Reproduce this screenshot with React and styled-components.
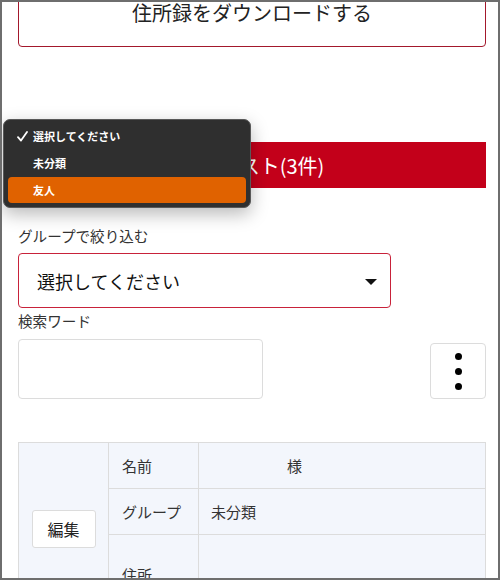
import React from 'react';
import styled, { createGlobalStyle } from 'styled-components';

const GlobalStyle = createGlobalStyle`
  html, body {
    margin: 0;
    padding: 0;
    background: #ffffff;
  }
  body {
    font-family: "Noto Sans CJK JP", "Noto Sans", sans-serif;
    color: #222;
  }
`;

const groups = ['選択してください', '未分類', '友人'];

const App = () => {
  return (
    <>
      <GlobalStyle />
      <Frame>
        <Content>
          <DownloadButton>住所録をダウンロードする</DownloadButton>
          <ListBar>住所リスト(3件)</ListBar>

          <Label>グループで絞り込む</Label>
          <SelectBox>
            <SelectText>選択してください</SelectText>
            <Caret />
          </SelectBox>

          <Label tight>検索ワード</Label>
          <SearchRow>
            <SearchInput />
            <KebabButton>
              <Dot />
              <Dot />
              <Dot />
            </KebabButton>
          </SearchRow>

          <Table>
            <tbody>
              <tr>
                <EditCell rowSpan={3}>
                  <EditButton>編集</EditButton>
                </EditCell>
                <HeadCell>名前</HeadCell>
                <DataCell indent="88px">様</DataCell>
              </tr>
              <tr>
                <HeadCell>グループ</HeadCell>
                <DataCell>未分類</DataCell>
              </tr>
              <tr>
                <HeadCell tall>住所</HeadCell>
                <DataCell tall></DataCell>
              </tr>
            </tbody>
          </Table>
        </Content>

        <Menu>
          {groups.map((g, i) => (
            <MenuItem key={g} active={i === 2}>
              <CheckSlot>
                {i === 0 && (
                  <svg width="11" height="11" viewBox="0 0 11 11">
                    <path d="M1 6.2 L4 9.6 L10 1" fill="none" stroke="#fff" strokeWidth="1.8" strokeLinecap="round" strokeLinejoin="round" />
                  </svg>
                )}
              </CheckSlot>
              {g}
            </MenuItem>
          ))}
        </Menu>
      </Frame>
    </>
  );
};

export default App;

const Frame = styled.div`
  position: relative;
  width: 500px;
  height: 580px;
  box-sizing: border-box;
  border: 2px solid #6e6e6e;
  overflow: hidden;
  background: #fff;
`;

const Content = styled.div`
  padding: 0 12px 0 16px;
  display: flex;
  flex-direction: column;
`;

const DownloadButton = styled.div`
  margin-top: -25px;
  height: 70px;
  box-sizing: border-box;
  border: 1px solid #a3182c;
  border-radius: 4px;
  display: flex;
  align-items: center;
  justify-content: center;
  font-size: 20px;
  color: #222;
`;

const ListBar = styled.div`
  margin-top: 95px;
  height: 46px;
  background: #c3001a;
  color: #fff;
  font-size: 20px;
  display: flex;
  align-items: center;
  justify-content: center;
`;

const Label = styled.div`
  font-size: 14.6px;
  color: #333;
  line-height: 20px;
  padding-top: ${({ tight }) => (tight ? '3px' : '38px')};
`;

const SelectBox = styled.div`
  margin-top: 7px;
  width: 373px;
  height: 55px;
  box-sizing: border-box;
  border: 1px solid #c8223a;
  border-radius: 4px;
  display: flex;
  align-items: center;
  justify-content: space-between;
  padding: 0 13px 0 18px;
`;

const SelectText = styled.span`
  font-size: 18px;
  color: #111;
`;

const Caret = styled.span`
  width: 0;
  height: 0;
  border-left: 6px solid transparent;
  border-right: 6px solid transparent;
  border-top: 6px solid #111;
  margin-top: 2px;
`;

const SearchRow = styled.div`
  margin-top: 8px;
  display: flex;
  justify-content: space-between;
  align-items: flex-end;
`;

const SearchInput = styled.div`
  width: 245px;
  height: 60px;
  box-sizing: border-box;
  border: 1px solid #dcdcdc;
  border-radius: 4px;
  background: #fff;
`;

const KebabButton = styled.div`
  width: 56px;
  height: 56px;
  box-sizing: border-box;
  border: 1px solid #dcdcdc;
  border-radius: 4px;
  display: flex;
  flex-direction: column;
  align-items: center;
  justify-content: center;
  gap: 8px;
`;

const Dot = styled.span`
  width: 7px;
  height: 7px;
  border-radius: 50%;
  background: #000;
`;

const Table = styled.table`
  margin-top: 43px;
  width: 468px;
  border-collapse: collapse;
  background: #f3f6fc;
  font-size: 15px;
  color: #333;
`;

const EditCell = styled.td`
  width: 89px;
  border: 1px solid #dcdcdc;
  text-align: center;
  vertical-align: middle;
  padding: 0;
`;

const EditButton = styled.div`
  display: inline-flex;
  align-items: center;
  justify-content: center;
  width: 64px;
  height: 38px;
  box-sizing: border-box;
  background: #fff;
  border: 1px solid #dcdcdc;
  border-radius: 3px;
  font-size: 16px;
  color: #222;
`;

const HeadCell = styled.td`
  width: 90px;
  height: ${({ tall }) => (tall ? '80px' : '46px')};
  border: 1px solid #dcdcdc;
  padding: 0 0 0 13px;
  box-sizing: border-box;
  vertical-align: middle;
  white-space: nowrap;
`;

const DataCell = styled.td`
  height: ${({ tall }) => (tall ? '80px' : '46px')};
  border: 1px solid #dcdcdc;
  padding: 0 0 0 ${({ indent }) => indent || '12px'};
  box-sizing: border-box;
`;

const Menu = styled.div`
  position: absolute;
  left: 1px;
  top: 117px;
  width: 248px;
  box-sizing: border-box;
  padding: 3px 4px 4px 4px;
  background: #2f2f2f;
  border: 1px solid #595959;
  border-radius: 7px;
  box-shadow: 0 6px 18px rgba(0, 0, 0, 0.28);
  display: flex;
  flex-direction: column;
  gap: 1px;
`;

const MenuItem = styled.div`
  height: 26px;
  display: flex;
  align-items: center;
  padding-left: 9px;
  border-radius: 4px;
  background: ${({ active }) => (active ? '#e06200' : 'transparent')};
  color: #fff;
  font-size: 11px;
  font-weight: 700;
`;

const CheckSlot = styled.span`
  width: 16px;
  display: inline-flex;
  align-items: center;
`;
